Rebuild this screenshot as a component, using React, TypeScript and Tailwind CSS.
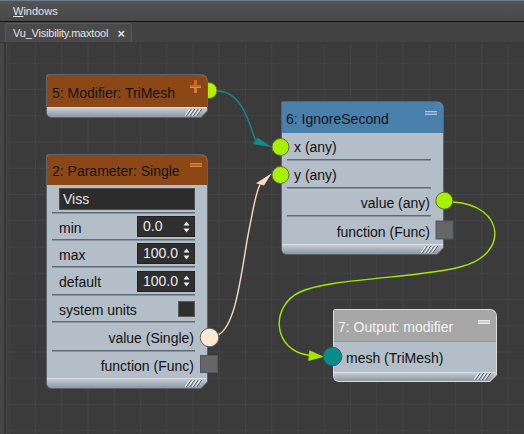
import React from 'react'

// 노드 에디터 화면 (Vu_Visibility.maxtool)
const FONT = "font-['Liberation_Sans',Arial,sans-serif]"

function Minus({ tone }: { tone: 'orange' | 'blue' | 'gray' }) {
  const cls =
    tone === 'orange'
      ? 'border-[#d9843f] bg-[#b5642a]'
      : tone === 'blue'
        ? 'border-[#a4c6e4] bg-[#6b98c0]'
        : 'border-[#ececec] bg-[#cfcfcf]'
  return <div className={`h-[4px] w-[12px] shrink-0 border-y ${cls}`} />
}

function Plus() {
  return (
    <svg width="11" height="13" viewBox="0 0 11 13" className="shrink-0">
      <rect x="4" y="0" width="3" height="13" fill="#c46b2c" />
      <rect x="0" y="5" width="11" height="3" fill="#c46b2c" />
      <rect x="0" y="7" width="11" height="1" fill="#e08a44" />
      <rect x="4" y="8" width="3" height="5" fill="#d77c38" />
    </svg>
  )
}

function Hatch() {
  return (
    <svg width="17" height="7" viewBox="0 0 17 7">
      {[0, 3.5, 7, 10.5].map((x, i) => (
        <g key={i}>
          <line x1={x} y1={7} x2={x + 5} y2={0} stroke="#f2f4f6" strokeWidth="1.2" />
          <line x1={x + 1.3} y1={7} x2={x + 6.3} y2={0} stroke="#5b6570" strokeWidth="1" />
        </g>
      ))}
    </svg>
  )
}

function Shell({ pos, border, children }: { pos: string; border: string; children: React.ReactNode }) {
  return (
    <div
      className={`absolute ${pos} ${border} rounded-tl-[3px] rounded-tr-[7px] rounded-bl-[6px] p-px [clip-path:polygon(0_0,100%_0,100%_calc(100%_-_7px),calc(100%_-_7px)_100%,0_100%)]`}
    >
      <div className="flex h-full flex-col overflow-hidden rounded-tl-[2px] rounded-tr-[6px] rounded-bl-[5px] bg-[#b4bec8] [clip-path:polygon(0_0,100%_0,100%_calc(100%_-_6.4px),calc(100%_-_6.4px)_100%,0_100%)]">
        {children}
      </div>
    </div>
  )
}

function Footer({ h = 'h-[10px]' }: { h?: string }) {
  return (
    <div className={`mt-auto flex ${h} shrink-0 items-end justify-end border-t border-[#d7dde3] bg-linear-to-b from-[#c3cbd3] to-[#8e98a2] pr-[5px] pb-[1px]`}>
      <Hatch />
    </div>
  )
}

function Sep() {
  return <div className="ml-[5px] mr-[12px] h-[2px] shrink-0 border-t border-[#5f6a75] bg-[#8a949e]" />
}

function Arrows() {
  return (
    <svg width="7" height="12" viewBox="0 0 7 12">
      <path d="M3.5 0.5 L6.5 4.5 H0.5 Z" fill="#f0f0f0" />
      <path d="M3.5 11.5 L6.5 7.5 H0.5 Z" fill="#f0f0f0" />
    </svg>
  )
}

function Spin({ v }: { v: string }) {
  return (
    <div className="flex h-[21px] w-[58px] items-center justify-between border border-[#222] bg-[#2f2f2f] pl-[5px] pr-[4px] text-[#ececec]">
      <span>{v}</span>
      <Arrows />
    </div>
  )
}

function ParamRow({ label, v, h }: { label: string; v: string; h: string }) {
  return (
    <div className={`flex ${h} shrink-0 items-center justify-between pl-[12px] pr-[12px]`}>
      <span className="pt-[3px]">{label}</span>
      <Spin v={v} />
    </div>
  )
}

function TextRow({ h, right, children }: { h: string; right?: boolean; children: React.ReactNode }) {
  return (
    <div className={`flex ${h} shrink-0 items-center ${right ? 'justify-end pr-[13px]' : 'pl-[12px]'}`}>
      <span className="pt-[3px]">{children}</span>
    </div>
  )
}

export default function App() {
  return (
    <div className={`flex h-[434px] w-[524px] flex-col overflow-hidden bg-[#454545] text-[14px] text-[#111] ${FONT}`}>
      {/* 메뉴 */}
      <div className="flex h-[21px] shrink-0 items-center border-t border-[#6c7d8e] bg-linear-to-b from-[#535353] to-[#484848] pl-[13px] text-[11px] text-[#e6e6e6]">
        <span>
          <span className="underline">W</span>indows
        </span>
      </div>
      <div className="h-px shrink-0 bg-[#111]" />

      {/* 탭 */}
      <div className="flex h-[20px] shrink-0 items-end bg-[#434343] pl-[5px]">
        <div className="flex h-[19px] w-[127px] items-center justify-between rounded-t-[3px] border-x border-t border-[#595959] bg-[#4a4a4a] pl-[7px] pr-[6px] text-[11px] tracking-[-0.2px] text-[#e4e4e4]">
          <span>Vu_Visibility.maxtool</span>
          <span className="text-[13px] font-bold leading-none text-[#dedede]">×</span>
        </div>
      </div>
      <div className="h-px shrink-0 bg-[#3a3a3a]" />

      {/* 캔버스 */}
      <div className="flex min-h-0 flex-1">
        <div className="w-[4px] shrink-0 bg-[#474747]" />
        <div className="w-[2px] shrink-0 bg-[#353535]" />
        <div className="w-px shrink-0 bg-[#4a4a4a]" />
        <div className="relative flex-1 overflow-hidden bg-[#3b3b3b]">
          {/* 그리드 + 와이어 */}
          <svg className="absolute inset-0" width="517" height="391" viewBox="7 43 517 391">
            <defs>
              <pattern id="grid" x="8.75" y="10.25" width="26.25" height="26.25" patternUnits="userSpaceOnUse">
                <path d="M0.5 0V26.25M0 0.5H26.25" stroke="#434343" strokeWidth="1" fill="none" />
              </pattern>
            </defs>
            <rect x="7" y="43" width="517" height="391" fill="url(#grid)" />

            <path d="M217 91 C240 91, 248 118, 255.5 140.5" stroke="#0f8d8d" strokeWidth="1.4" fill="none" />
            <polygon points="272,147.3 257.7,137.7 253,144" fill="#0f8d8d" />

            <path d="M218 335 C238 325, 242 262, 250 225 C254 205, 256 192, 260 184.5" stroke="#f4dcc0" strokeWidth="1.4" fill="none" />
            <polygon points="271.7,173.3 256,183.3 264,185.5" fill="#f4dcc0" />

            <path
              d="M453 202 C505 205, 510 255, 460 267 C420 278, 330 278, 300 292 C270 306, 272 350, 309 355.3"
              stroke="#a4e600"
              strokeWidth="1.4"
              fill="none"
            />
            <polygon points="324,356.7 309.3,350.2 308.3,361" fill="#a4e600" />

            <circle cx="209" cy="90.5" r="8" fill="#b4f000" stroke="#5e6e34" strokeWidth="1" />
          </svg>

          {/* 5: Modifier */}
          <Shell pos="left-[39px] top-[31px] w-[162px] h-[44px]" border="bg-[#5a6470]">
            <div className="flex h-[32px] shrink-0 items-start justify-between bg-[#8b4715] pl-[5px] pr-[6px]">
              <span className="self-center pt-[4px] text-[14px] text-[#151515]">5: Modifier: TriMesh</span>
              <div className="mt-[5px]">
                <Plus />
              </div>
            </div>
            <Footer />
          </Shell>

          {/* 2: Parameter */}
          <Shell pos="left-[39px] top-[111px] w-[162px] h-[235px]" border="bg-[#5a6470]">
            <div className="flex h-[30px] shrink-0 items-start justify-between bg-[#8b4715] pl-[5px] pr-[5px]">
              <span className="self-center pt-[2px] text-[14px] text-[#151515]">2: Parameter: Single</span>
              <div className="mt-[8px]">
                <Minus tone="orange" />
              </div>
            </div>
            <div className="flex h-[27px] shrink-0 items-start pl-[12px] pr-[12px] pt-[3px]">
              <div className="flex h-[22px] flex-1 items-center border border-[#4e4e4e] bg-[#2c2c2c] pl-[3px] text-[#e6e6e6]">
                Viss
              </div>
            </div>
            <Sep />
            <ParamRow label="min" v="0.0" h="h-[25px]" />
            <Sep />
            <ParamRow label="max" v="100.0" h="h-[25px]" />
            <Sep />
            <ParamRow label="default" v="100.0" h="h-[26px]" />
            <Sep />
            <div className="flex h-[25px] shrink-0 items-center justify-between pl-[12px] pr-[12px]">
              <span className="pt-[3px]">system units</span>
              <div className="h-[16px] w-[17px] border border-[#5a5a5a] bg-[#2e2e2e]" />
            </div>
            <Sep />
            <TextRow h="h-[27px]" right>value (Single)</TextRow>
            <Sep />
            <TextRow h="h-[26px]" right>function (Func)</TextRow>
            <Footer />
          </Shell>

          {/* 6: IgnoreSecond */}
          <Shell pos="left-[274px] top-[58px] w-[163px] h-[154px]" border="bg-[#5a6470]">
            <div className="flex h-[31px] shrink-0 items-start justify-between bg-[#4a80ac] pl-[4px] pr-[6px]">
              <span className="self-center pt-[3px] text-[14px] text-[#151515]">6: IgnoreSecond</span>
              <div className="mt-[9px]">
                <Minus tone="blue" />
              </div>
            </div>
            <TextRow h="h-[26px]">x (any)</TextRow>
            <Sep />
            <TextRow h="h-[26px]">y (any)</TextRow>
            <Sep />
            <TextRow h="h-[26px]" right>value (any)</TextRow>
            <Sep />
            <TextRow h="h-[27px]" right>function (Func)</TextRow>
            <Footer />
          </Shell>

          {/* 7: Output */}
          <Shell pos="left-[326px] top-[266px] w-[164px] h-[73px]" border="bg-[#dcdcdc]">
            <div className="flex h-[32px] shrink-0 items-start justify-between border-b border-[#8e969e] bg-[#a7a7a7] pl-[4px] pr-[6px]">
              <span className="self-center pt-[3px] text-[14px] text-[#f4f4f4]">7: Output: modifier</span>
              <div className="mt-[10px]">
                <Minus tone="gray" />
              </div>
            </div>
            <TextRow h="h-[29px]">mesh (TriMesh)</TextRow>
            <Footer h="h-[9px]" />
          </Shell>

          {/* 핀 */}
          <svg className="pointer-events-none absolute inset-0" width="517" height="391" viewBox="7 43 517 391">
            <circle cx="280.5" cy="147" r="8.5" fill="#a6f000" stroke="#5e6e34" strokeWidth="1" />
            <circle cx="280.5" cy="175" r="8.5" fill="#a6f000" stroke="#5e6e34" strokeWidth="1" />
            <circle cx="444.3" cy="200.7" r="8.5" fill="#a6f000" stroke="#5e6e34" strokeWidth="1" />
            <rect x="436" y="221" width="17" height="18" fill="#666" stroke="#4d5863" strokeWidth="1" />
            <circle cx="209.5" cy="337.5" r="9.3" fill="#fde9cf" stroke="#5c6169" strokeWidth="1" />
            <rect x="200.5" y="355.5" width="17" height="17" fill="#666" stroke="#4d5863" strokeWidth="1" />
            <circle cx="332.5" cy="356.5" r="9.3" fill="#0b8c8c" stroke="#3c5560" strokeWidth="1" />
          </svg>
        </div>
      </div>
    </div>
  )
}
